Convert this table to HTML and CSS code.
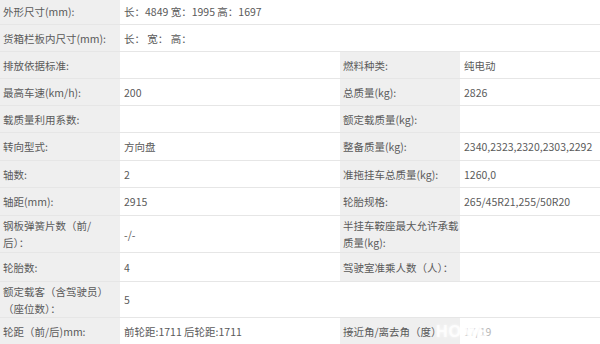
FILE: index.html
```html
<!DOCTYPE html>
<html lang="zh-CN">
<head>
<meta charset="utf-8">
<title>车辆参数</title>
<link rel="stylesheet" href="styles.css">
</head>
<body>
<div class="wrap">
<table class="spec">
  <colgroup>
    <col class="c-l1"><col class="c-v1"><col class="c-l2"><col class="c-v2">
  </colgroup>
  <tr class="r-first">
    <td class="lbl">外形尺寸(mm):</td>
    <td class="val" colspan="3">长：4849 宽：1995 高：1697</td>
  </tr>
  <tr>
    <td class="lbl">货箱栏板内尺寸(mm):</td>
    <td class="val" colspan="3">长：&nbsp;宽：&nbsp;高：</td>
  </tr>
  <tr>
    <td class="lbl">排放依据标准:</td>
    <td class="val"></td>
    <td class="lbl">燃料种类:</td>
    <td class="val">纯电动</td>
  </tr>
  <tr>
    <td class="lbl">最高车速(km/h):</td>
    <td class="val">200</td>
    <td class="lbl">总质量(kg):</td>
    <td class="val">2826</td>
  </tr>
  <tr>
    <td class="lbl">载质量利用系数:</td>
    <td class="val"></td>
    <td class="lbl">额定载质量(kg):</td>
    <td class="val"></td>
  </tr>
  <tr class="r-28">
    <td class="lbl">转向型式:</td>
    <td class="val">方向盘</td>
    <td class="lbl">整备质量(kg):</td>
    <td class="val">2340,2323,2320,2303,2292</td>
  </tr>
  <tr>
    <td class="lbl">轴数:</td>
    <td class="val">2</td>
    <td class="lbl">准拖挂车总质量(kg):</td>
    <td class="val">1260,0</td>
  </tr>
  <tr class="r-28">
    <td class="lbl">轴距(mm):</td>
    <td class="val">2915</td>
    <td class="lbl">轮胎规格:</td>
    <td class="val">265/45R21,255/50R20</td>
  </tr>
  <tr class="r-tall">
    <td class="lbl">钢板弹簧片数（前/<br>后）：</td>
    <td class="val">-/-</td>
    <td class="lbl">半挂车鞍座最大允许承载<br>质量(kg):</td>
    <td class="val"></td>
  </tr>
  <tr class="r-29">
    <td class="lbl">轮胎数:</td>
    <td class="val">4</td>
    <td class="lbl">驾驶室准乘人数（人）：</td>
    <td class="val"></td>
  </tr>
  <tr class="r-tall2">
    <td class="lbl">额定载客（含驾驶员）<br>（座位数）：</td>
    <td class="val">5</td>
    <td class="val"></td>
    <td class="val"></td>
  </tr>
  <tr>
    <td class="lbl">轮距（前/后)mm:</td>
    <td class="val">前轮距:1711 后轮距:1711</td>
    <td class="lbl">接近角/离去角（度）</td>
    <td class="val faded">17/19</td>
  </tr>
</table>
<span class="mark">HOME</span>
</div>
</body>
</html>
```

FILE: styles.css
```css
html, body {
  margin: 0;
  padding: 0;
  background: #ffffff;
}

.wrap {
  position: relative;
  width: 600px;
  height: 344px;
  overflow: hidden;
}

.spec {
  width: 600px;
  border-collapse: collapse;
  table-layout: fixed;
  font-family: "Noto Sans CJK SC", "Noto Sans", sans-serif;
  font-size: 10.5px;
  color: #5a5a5a;
  margin-top: -2px;
}

.c-l1 { width: 120px; }
.c-v1 { width: 220px; }
.c-l2 { width: 120px; }
.c-v2 { width: 140px; }

.spec td {
  height: 26px;
  padding: 0 0 0 4px;
  border-bottom: 1px solid #e6e6e6;
  line-height: 17px;
  vertical-align: middle;
  white-space: nowrap;
}

.spec .r-first td { height: 26px; }
.spec .r-28 td { height: 27px; }
.spec .r-29 td { height: 28px; }
.spec .r-tall td { height: 36px; }
.spec .r-tall2 td { height: 35px; }

.spec td.lbl {
  background: #efefef;
  padding-left: 3px;
}

.spec td.val {
  background: #ffffff;
}

.faded {
  color: #b5b5b5;
}

.mark {
  position: absolute;
  left: 436px;
  top: 323px;
  font-family: "Liberation Sans", sans-serif;
  font-weight: bold;
  font-size: 16px;
  letter-spacing: 1px;
  color: rgba(255, 255, 255, 0.8);
  text-shadow: 0 0 3px rgba(255, 255, 255, 0.9);
}
```
